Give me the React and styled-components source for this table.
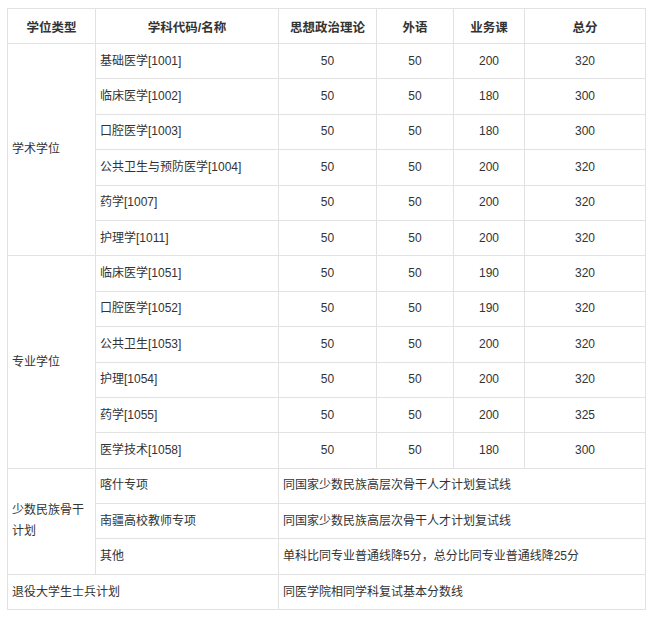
import React from "react"
import styled, { createGlobalStyle } from "styled-components"

const GlobalStyle = createGlobalStyle`
  body {
    margin: 0;
    background: #ffffff;
    font-family: "Liberation Sans", "Noto Sans CJK SC", sans-serif;
  }
`

const Page = styled.div`
  padding: 8px 0 0 7px;
`

const Table = styled.table`
  border-collapse: collapse;
  table-layout: fixed;
  width: 638px;
  font-size: 12px;
  color: #333;
`

const Row = styled.tr`
  height: 35.4px;
`

const HeadRow = styled.tr`
  height: 35px;
`

const Head = styled.th`
  border: 1px solid #e2e2e2;
  font-weight: 700;
  font-size: 12.5px;
  text-align: center;
  padding: 0 4px;
  color: #333;
`

const Cell = styled.td`
  border: 1px solid #e2e2e2;
  padding: 0 4px;
  text-align: ${(props) => (props.center ? "center" : "left")};
  vertical-align: middle;
  line-height: 21px;
`

const widths = [88, 183, 98, 77, 71, 121]

const academic = [
  ["基础医学[1001]", 50, 50, 200, 320],
  ["临床医学[1002]", 50, 50, 180, 300],
  ["口腔医学[1003]", 50, 50, 180, 300],
  ["公共卫生与预防医学[1004]", 50, 50, 200, 320],
  ["药学[1007]", 50, 50, 200, 320],
  ["护理学[1011]", 50, 50, 200, 320],
]

const professional = [
  ["临床医学[1051]", 50, 50, 190, 320],
  ["口腔医学[1052]", 50, 50, 190, 320],
  ["公共卫生[1053]", 50, 50, 200, 320],
  ["护理[1054]", 50, 50, 200, 320],
  ["药学[1055]", 50, 50, 200, 325],
  ["医学技术[1058]", 50, 50, 180, 300],
]

const minority = [
  ["喀什专项", "同国家少数民族高层次骨干人才计划复试线"],
  ["南疆高校教师专项", "同国家少数民族高层次骨干人才计划复试线"],
  ["其他", "单科比同专业普通线降5分，总分比同专业普通线降25分"],
]

const ScoreRows = ({ label, rows }) =>
  rows.map((r, i) => (
    <Row key={r[0]}>
      {i === 0 ? <Cell rowSpan={rows.length}>{label}</Cell> : null}
      <Cell>{r[0]}</Cell>
      <Cell center>{r[1]}</Cell>
      <Cell center>{r[2]}</Cell>
      <Cell center>{r[3]}</Cell>
      <Cell center>{r[4]}</Cell>
    </Row>
  ))

const App = () => (
  <Page>
    <GlobalStyle />
    <Table>
      <colgroup>
        {widths.map((w, i) => (
          <col key={i} style={{ width: w }} />
        ))}
      </colgroup>
      <thead>
        <HeadRow>
          <Head>学位类型</Head>
          <Head>学科代码/名称</Head>
          <Head>思想政治理论</Head>
          <Head>外语</Head>
          <Head>业务课</Head>
          <Head>总分</Head>
        </HeadRow>
      </thead>
      <tbody>
        <ScoreRows label="学术学位" rows={academic} />
        <ScoreRows label="专业学位" rows={professional} />
        {minority.map((r, i) => (
          <Row key={r[0]}>
            {i === 0 ? <Cell rowSpan={3}>少数民族骨干<br />计划</Cell> : null}
            <Cell>{r[0]}</Cell>
            <Cell colSpan={4}>{r[1]}</Cell>
          </Row>
        ))}
        <Row>
          <Cell colSpan={2}>退役大学生士兵计划</Cell>
          <Cell colSpan={4}>同医学院相同学科复试基本分数线</Cell>
        </Row>
      </tbody>
    </Table>
  </Page>
)

export default App
